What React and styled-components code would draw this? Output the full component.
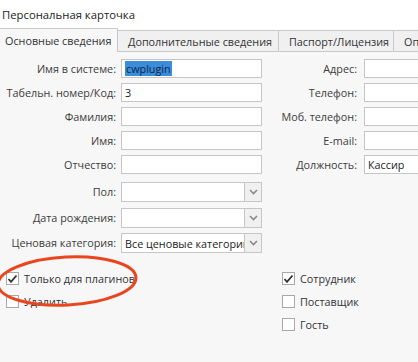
import React from "react"
import styled, { createGlobalStyle } from "styled-components"

const GlobalStyle = createGlobalStyle`
  html, body {
    margin: 0;
    padding: 0;
    background: #ffffff;
  }
  body {
    font-family: "Open Sans", "Noto Sans", sans-serif;
    font-size: 10.8px;
    color: #333;
  }
`

const Window = styled.div`
  position: relative;
  width: 418px;
  height: 362px;
  overflow: hidden;
  display: flex;
  flex-direction: column;
  background: #f7f7f7;
`

const Title = styled.div`
  height: 28px;
  padding-left: 2px;
  display: flex;
  align-items: center;
  background: #fff;
  color: #222;
  font-size: 11.3px;
`

const TabBar = styled.div`
  display: flex;
  align-items: flex-end;
  height: 23px;
  background: #fff;
  border-bottom: 1px solid #c9c9c9;
  white-space: nowrap;
`

const Tab = styled.div`
  flex: none;
  width: ${({ w }) => w}px;
  box-sizing: border-box;
  height: ${({ active }) => (active ? 24 : 21)}px;
  margin-bottom: ${({ active }) => (active ? -1 : 0)}px;
  padding-left: ${({ active }) => (active ? 5 : 10)}px;
  display: flex;
  align-items: center;
  overflow: hidden;
  background: ${({ active }) => (active ? "#f7f7f7" : "#f0f0f0")};
  border: 1px solid #c9c9c9;
  border-left: ${({ first }) => (first ? "none" : "1px solid #c9c9c9")};
  border-bottom: none;
  margin-left: -1px;
  color: #333;
  &:first-child {
    margin-left: 0;
  }
`

const Content = styled.div`
  flex: 1;
  padding-top: 7px;
  display: flex;
  flex-direction: column;
`

const Columns = styled.div`
  display: flex;
`

const FieldGroup = styled.div`
  display: grid;
  grid-template-columns: ${({ label, input }) => `${label}px ${input}px`};
  column-gap: ${({ gap }) => gap}px;
  row-gap: 5px;
  margin-left: ${({ offset }) => offset || 0}px;
  align-content: start;
`

const Label = styled.div`
  height: 19px;
  margin-top: ${({ top }) => top || 0}px;
  display: flex;
  align-items: center;
  justify-content: flex-end;
  color: #3c3c3c;
  white-space: nowrap;
`

const Input = styled.div`
  box-sizing: border-box;
  height: ${({ tall }) => (tall ? 20 : 19)}px;
  margin-top: ${({ top }) => top || 0}px;
  border: 1px solid #c6c6c6;
  background: #fff;
  display: flex;
  align-items: center;
  padding-left: 3px;
  color: #222;
  white-space: nowrap;
  overflow: hidden;
`

const Selected = styled.span`
  background: #3b8ddb;
  color: #0d2747;
  padding: 0 1px;
  line-height: 15px;
`

const Combo = styled(Input)`
  padding-left: 0;
  align-items: stretch;
`

const ComboText = styled.div`
  flex: 1;
  min-width: 0;
  overflow: hidden;
  display: flex;
  align-items: center;
  padding-left: 3px;
  white-space: nowrap;
`

const ComboButton = styled.div`
  width: 16px;
  flex: none;
  border-left: 1px solid #c6c6c6;
  background: #f0f0f0;
  display: flex;
  align-items: center;
  justify-content: center;
`

const Checks = styled.div`
  display: flex;
  margin-top: 19px;
`

const CheckColumn = styled.div`
  display: flex;
  flex-direction: column;
  gap: 10px;
  width: ${({ w }) => w}px;
  padding-left: ${({ pad }) => pad}px;
  box-sizing: border-box;
`

const CheckRow = styled.div`
  display: flex;
  align-items: center;
  gap: 5px;
  height: 13px;
  color: #333;
  white-space: nowrap;
`

const Box = styled.div`
  box-sizing: border-box;
  width: 13px;
  height: 13px;
  border: 1px solid #a8a8a8;
  background: #fff;
  display: flex;
  align-items: center;
  justify-content: center;
`

const Annotation = styled.svg`
  position: absolute;
  left: 0;
  top: 252px;
  pointer-events: none;
`

const Chevron = () => (
  <svg width="9" height="6" viewBox="0 0 9 6">
    <path d="M1 1 L4.5 4.5 L8 1" fill="none" stroke="#8a8a8a" strokeWidth="1.6" />
  </svg>
)

const Check = ({ checked, children }) => (
  <CheckRow>
    <Box>
      {checked && (
        <svg width="11" height="10" viewBox="0 0 11 10">
          <path d="M1.5 5 L4 7.8 L9.5 1.5" fill="none" stroke="#333" strokeWidth="1.8" />
        </svg>
      )}
    </Box>
    {children}
  </CheckRow>
)

export default function App() {
  return (
    <Window>
      <GlobalStyle />
      <Title>Персональная карточка</Title>
      <TabBar>
        <Tab active first w={118}>Основные сведения</Tab>
        <Tab w={162}>Дополнительные сведения</Tab>
        <Tab w={116}>Паспорт/Лицензия</Tab>
        <Tab w={60}>Опции</Tab>
      </TabBar>
      <Content>
        <Columns>
          <FieldGroup label={116} input={141} gap={5}>
            <Label>Имя в системе:</Label>
            <Input><Selected>cwplugin</Selected></Input>
            <Label>Табельн. номер/Код:</Label>
            <Input>3</Input>
            <Label>Фамилия:</Label>
            <Input />
            <Label>Имя:</Label>
            <Input />
            <Label>Отчество:</Label>
            <Input />
            <Label top={3}>Пол:</Label>
            <Combo tall top={3}>
              <ComboText />
              <ComboButton><Chevron /></ComboButton>
            </Combo>
            <Label top={1}>Дата рождения:</Label>
            <Combo tall top={1}>
              <ComboText />
              <ComboButton><Chevron /></ComboButton>
            </Combo>
            <Label>Ценовая категория:</Label>
            <Combo tall>
              <ComboText>Все ценовые категории</ComboText>
              <ComboButton><Chevron /></ComboButton>
            </Combo>
          </FieldGroup>
          <FieldGroup label={87} input={80} gap={7} offset={8}>
            <Label>Адрес:</Label>
            <Input />
            <Label>Телефон:</Label>
            <Input />
            <Label>Моб. телефон:</Label>
            <Input />
            <Label>E-mail:</Label>
            <Input />
            <Label>Должность:</Label>
            <Input>Кассир</Input>
          </FieldGroup>
        </Columns>
        <Checks>
          <CheckColumn w={282} pad={6}>
            <Check checked>Только для плагинов</Check>
            <Check>Удалить</Check>
          </CheckColumn>
          <CheckColumn w={136} pad={0}>
            <Check checked>Сотрудник</Check>
            <Check>Поставщик</Check>
            <Check>Гость</Check>
          </CheckColumn>
        </Checks>
      </Content>
      <Annotation width="150" height="64" viewBox="0 0 150 64">
        <ellipse
          cx="67"
          cy="29"
          rx="69"
          ry="24"
          transform="rotate(-3 67 29)"
          fill="none"
          stroke="#e8461e"
          strokeWidth="3"
        />
      </Annotation>
    </Window>
  )
}
